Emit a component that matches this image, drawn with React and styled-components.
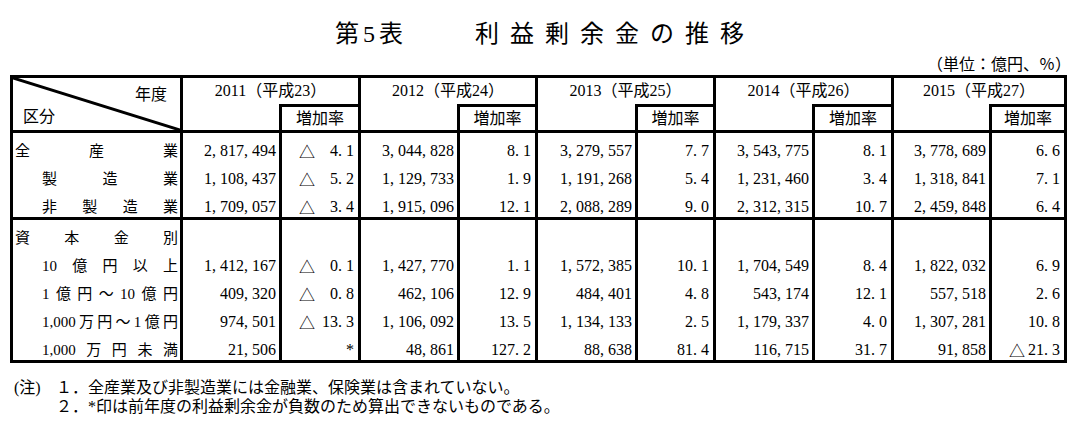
import styled, { createGlobalStyle } from 'styled-components';

const GlobalStyle = createGlobalStyle`
  *, *::before, *::after {
    box-sizing: border-box;
  }
  body {
    margin: 0;
    background: #fff;
    color: #000;
    font-family: "Liberation Serif", "Noto Sans CJK JP", serif;
  }
`;

const Page = styled.div`
  width: 1090px;
  padding-top: 22px;
`;

const Title = styled.h1`
  margin: 0;
  display: flex;
  justify-content: center;
  gap: 72px;
  padding-right: 11px;
  font-size: 24px;
  font-weight: normal;
  line-height: 24px;
`;

const TitleNo = styled.span`
  letter-spacing: 4px;
  margin-right: -4px;
`;

const TitleText = styled.span`
  letter-spacing: 11px;
  margin-right: -11px;
`;

const Unit = styled.div`
  margin-top: 11px;
  padding-right: 19px;
  text-align: right;
  font-size: 16px;
  line-height: 16px;
`;

const Table = styled.div`
  margin: 2px 0 0 10px;
  width: 1057px;
  border: 3px solid #000;
  display: grid;
  grid-template-columns: 167px 99px 79px 99px 78px 100px 78px 99px 79px 98px 75px;
  font-size: 16px;
  line-height: 16px;
`;

const Corner = styled.div`
  grid-row: span 2;
  position: relative;
  height: 52px;
  display: flex;
  flex-direction: column;
  justify-content: space-between;
  padding: 9px 13px 5px 10px;
`;

const Diagonal = styled.svg`
  position: absolute;
  inset: 0;
  width: 100%;
  height: 100%;
`;

const CornerTop = styled.span`
  align-self: flex-end;
`;

const YearCell = styled.div`
  grid-column: span 2;
  height: 26px;
  border-left: 3px solid #000;
  display: flex;
  align-items: center;
  justify-content: center;
`;

const HeadBlank = styled.div`
  height: 26px;
  border-left: 3px solid #000;
`;

const RateHead = styled.div`
  height: 26px;
  border-left: 3px solid #000;
  border-top: 3px solid #000;
  display: flex;
  align-items: center;
  justify-content: center;
`;

const Cell = styled.div`
  height: ${(p) => (p.$first ? 31 : 28)}px;
  border-top: ${(p) => (p.$first ? '3px solid #000' : 'none')};
  display: flex;
  align-items: flex-end;
  padding-bottom: 2px;
`;

const LabelCell = styled(Cell)`
  justify-content: space-between;
  padding-left: ${(p) => (p.$indent ? 29 : 2)}px;
  padding-right: 2px;
  font-size: 15px;
`;

const ValueCell = styled(Cell)`
  border-left: 3px solid #000;
  justify-content: flex-end;
  padding-right: 3px;
`;

const RateCell = styled(ValueCell)`
  padding-left: 17px;
  padding-right: 4px;
`;

const Delta = styled.span`
  margin-right: auto;
  font-family: "Noto Sans CJK JP", sans-serif;
`;

const Punct = styled.span`
  display: inline-block;
  width: 0.5em;
  text-align: left;
`;

const Notes = styled.div`
  margin: 15px 0 0 14px;
  display: grid;
  grid-template-columns: 42px auto;
  font-size: 16px;
  line-height: 19px;
`;

const NoteMark = styled.span`
  grid-row: span 2;
`;

const years = [
  ['2011', '23'],
  ['2012', '24'],
  ['2013', '25'],
  ['2014', '26'],
  ['2015', '27'],
];

const sections = [
  [
    { label: ['全', '産', '業'], values: ['2,817,494', '△4.1', '3,044,828', '8.1', '3,279,557', '7.7', '3,543,775', '8.1', '3,778,689', '6.6'] },
    { label: ['製', '造', '業'], indent: true, values: ['1,108,437', '△5.2', '1,129,733', '1.9', '1,191,268', '5.4', '1,231,460', '3.4', '1,318,841', '7.1'] },
    { label: ['非', '製', '造', '業'], indent: true, values: ['1,709,057', '△3.4', '1,915,096', '12.1', '2,088,289', '9.0', '2,312,315', '10.7', '2,459,848', '6.4'] },
  ],
  [
    { label: ['資', '本', '金', '別'], values: ['', '', '', '', '', '', '', '', '', ''] },
    { label: ['10', '億', '円', '以', '上'], indent: true, values: ['1,412,167', '△0.1', '1,427,770', '1.1', '1,572,385', '10.1', '1,704,549', '8.4', '1,822,032', '6.9'] },
    { label: ['1', '億', '円', '～', '10', '億', '円'], indent: true, values: ['409,320', '△0.8', '462,106', '12.9', '484,401', '4.8', '543,174', '12.1', '557,518', '2.6'] },
    { label: ['1,000', '万', '円', '～', '1', '億', '円'], indent: true, values: ['974,501', '△13.3', '1,106,092', '13.5', '1,134,133', '2.5', '1,179,337', '4.0', '1,307,281', '10.8'] },
    { label: ['1,000', '万', '円', '未', '満'], indent: true, values: ['21,506', '*', '48,861', '127.2', '88,638', '81.4', '116,715', '31.7', '91,858', '△21.3'] },
  ],
];

function Num({ v }) {
  return (
    <span>
      {[...v].map((c, i) => (c === ',' || c === '.' ? <Punct key={i}>{c}</Punct> : c))}
    </span>
  );
}

function Rate({ v, first }) {
  const neg = v.startsWith('△');
  return (
    <RateCell $first={first}>
      {neg && <Delta>△</Delta>}
      <Num v={neg ? v.slice(1) : v} />
    </RateCell>
  );
}

export default function App() {
  return (
    <Page>
      <GlobalStyle />
      <Title>
        <TitleNo>第5表</TitleNo>
        <TitleText>利益剰余金の推移</TitleText>
      </Title>
      <Unit>（単位：億円、％）</Unit>

      <Table>
        <Corner>
          <Diagonal viewBox="0 0 100 100" preserveAspectRatio="none">
            <line x1="0" y1="0" x2="100" y2="100" stroke="#000" strokeWidth="3" vectorEffect="non-scaling-stroke" />
          </Diagonal>
          <CornerTop>年度</CornerTop>
          <span>区分</span>
        </Corner>
        {years.map(([y, h]) => (
          <YearCell key={y}>{y}（平成{h}）</YearCell>
        ))}
        {years.map(([y]) => [
          <HeadBlank key={y + 'b'} />,
          <RateHead key={y + 'r'}>増加率</RateHead>,
        ])}

        {sections.map((rows) =>
          rows.map((row, r) => [
            <LabelCell key={row.label.join('')} $first={r === 0} $indent={row.indent}>
              {row.label.map((t, i) => (
                <span key={i}>{t}</span>
              ))}
            </LabelCell>,
            row.values.map((v, i) =>
              i % 2 === 0 ? (
                <ValueCell key={row.label.join('') + i} $first={r === 0}>
                  <Num v={v} />
                </ValueCell>
              ) : (
                <Rate key={row.label.join('') + i} v={v} first={r === 0} />
              )
            ),
          ])
        )}
      </Table>

      <Notes>
        <NoteMark>(注)</NoteMark>
        <span>１．全産業及び非製造業には金融業、保険業は含まれていない。</span>
        <span>２．*印は前年度の利益剰余金が負数のため算出できないものである。</span>
      </Notes>
    </Page>
  );
}
